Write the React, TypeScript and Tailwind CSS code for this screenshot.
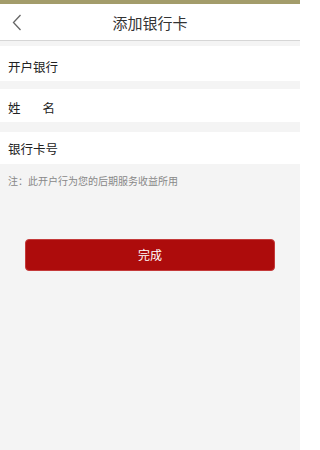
export default function App() {
  const font = { fontFamily: '"Noto Sans CJK SC", "Noto Sans", sans-serif' };
  return (
    <div className="w-[300px] h-[450px] bg-[#f4f4f4] flex flex-col" style={font}>
      <div className="h-[4px] bg-[#a39c6b]" />
      <div className="h-[37px] bg-white border-b border-[#d6d6d6] relative flex items-center justify-center">
        <svg className="absolute left-[12px] top-[10px]" width="10" height="17" viewBox="0 0 10 17" fill="none">
          <path d="M8.5 1 L1.5 8.5 L8.5 16" stroke="#666" strokeWidth="1.3" />
        </svg>
        <span className="text-[15px] text-[#333] pt-[2px]">添加银行卡</span>
      </div>
      <div className="h-[5px]" />
      <div className="h-[35px] bg-white flex items-center px-[8px] pt-[7px] text-[12.5px] text-[#222]">开户银行</div>
      <div className="h-[8px]" />
      <div className="h-[33px] bg-white flex items-center px-[8px] pt-[6px] text-[12.5px] text-[#222]">
        <span>姓</span>
        <span className="ml-[22px]">名</span>
      </div>
      <div className="h-[10px]" />
      <div className="h-[32px] bg-white flex items-center px-[8px] pt-[2px] text-[12.5px] text-[#222]">银行卡号</div>
      <div className="px-[8px] pt-[9px] text-[10px] text-[#888]">注：此开户行为您的后期服务收益所用</div>
      <div className="px-[25px] mt-[51px]">
        <button className="w-full h-[32px] rounded-[4px] bg-[#ad0c0c] border border-[#c43a3a] text-white text-[12px]">完成</button>
      </div>
    </div>
  );
}
